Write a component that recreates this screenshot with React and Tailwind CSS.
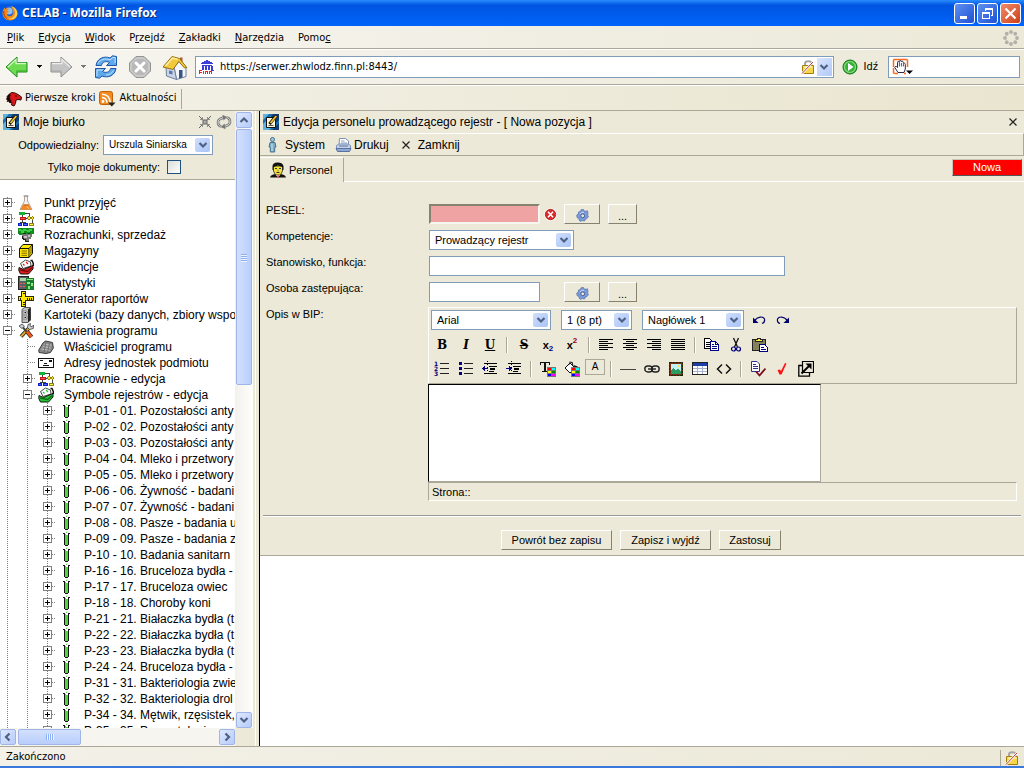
import React from "react";

const UI = "font-['DejaVu_Sans_Condensed','Noto_Sans',sans-serif]";

/* ---------- shared drawing helpers ---------- */

function Pic({ w = 16, h = 16, box, crisp = false, children }) {
  return (
    <svg
      width={w}
      height={h}
      viewBox={box || `0 0 ${w} ${h}`}
      shapeRendering={crisp ? "crispEdges" : "auto"}
      aria-hidden="true"
      className="block shrink-0"
      fill="none"
    >
      {children}
    </svg>
  );
}

function Chevron({ dir = "down", color = "#4d6185" }) {
  const d = {
    down: "M1.500 3 L5 6.500 L8.500 3",
    up: "M1.500 7 L5 3.500 L8.500 7",
    left: "M6.500 1.500 L3 5 L6.500 8.500",
    right: "M3.500 1.500 L7 5 L3.500 8.500",
  }[dir];
  return (
    <Pic w={10} h={10}>
      <path d={d} stroke={color} strokeWidth="2.200" />
    </Pic>
  );
}

/* ---------- browser icons ---------- */

const Firefox = () => (
  <Pic>
    <circle cx="8" cy="8" r="7" fill="#2b5fc7" />
    <circle cx="7" cy="6" r="3.600" fill="#8fc1f5" />
    <path d="M8 15.500C3.500 15.500.500 12 .500 8 .500 5.500 1.500 4 2.500 2.500L3.200 4.200C4.500 3 6 3.200 7 4L5.500 5.500 7 7C5.500 7.500 4.500 8.500 5 10 6.500 12 10 11.500 11 9 11.800 6.500 10.500 3.500 9 1.500 13 2 15.500 5 15.500 8.500 15.500 12.500 12 15.500 8 15.500Z" fill="#f08a1d" />
    <path d="M9 1.500C12 3 13.500 5.500 13 9 12.500 12 9.500 14 6 13.500 9 15.500 15 14 15.300 8.500 15.300 5 13 2 9 1.500Z" fill="#fbd34b" />
    <path d="M1 6C.500 10 3 14.500 8 15.300 4 13.500 2 10 2.500 6Z" fill="#c8480f" />
  </Pic>
);

const BackArrow = ({ on }) => (
  <Pic w={24} h={24}>
    <path d="M1 12 12 2V7.500H22V17H12V22Z" fill={on ? "#6ddb4f" : "#c4c4c4"} stroke={on ? "#1d8a1c" : "#8f8f8f"} strokeLinejoin="round" />
    <path d="M3 12 11 4.500V8.500H21" stroke={on ? "#d2f7c5" : "#ececec"} strokeWidth="1.300" />
    <path d="M11 16H21" stroke={on ? "#3fb42d" : "#adadad"} strokeWidth="1.300" />
  </Pic>
);

const Reload = () => (
  <Pic w={24} h={24}>
    <path d="M2 10.500C3 3.500 10 .500 16 3L18.500 .800 22.500 1.500V10.500H12.500L15.500 7.500C12 5.500 8 7 7.500 10.500Z" fill="#5fa8ea" stroke="#1c57ab" />
    <path d="M22 13.500C21 20.500 14 23.500 8 21L5.500 23.200 1.500 22.500V13.500H11.500L8.500 16.500C12 18.500 16 17 16.500 13.500Z" fill="#5fa8ea" stroke="#1c57ab" />
    <path d="M4 8.500C6 4.500 11 3 16 4.800L19 2.500H21.200V8" stroke="#c5e4ff" />
    <path d="M3 21V15H9M19.500 15.500C18 18.500 15 20 12 20" stroke="#c5e4ff" />
  </Pic>
);

const Stop = () => (
  <Pic w={24} h={24}>
    <path d="M8 1.500H16L22.500 8V16L16 22.500H8L1.500 16V8Z" fill="#b9b9b9" stroke="#949494" />
    <path d="M8.500 3H15.500L21 8.500V15.500L15.500 21H8.500L3 15.500V8.500Z" stroke="#dadada" />
    <path d="M8 8 16 16M16 8 8 16" stroke="#fff" strokeWidth="3" strokeLinecap="round" />
  </Pic>
);

const Home = () => (
  <Pic w={26} h={25}>
    <path d="M18 2.500H20.500V7H18Z" fill="#b5562e" />
    <path d="M12 12 17.500 6 24 12V21.500L14.500 24.500Z" fill="#f3f6fb" stroke="#6d7f9b" />
    <path d="M4 12 12.500 14 14.500 24.500 4.500 21Z" fill="#c9d6e8" stroke="#6d7f9b" />
    <path d="M1 12 10 1.500 17.500 3.500 24.800 12.500 22.500 13 16.800 6.500 11 14.500Z" fill="#f3c83c" stroke="#96700d" />
    <path d="M3.500 11 10.500 3 15.500 4.300" stroke="#fdf0a6" strokeWidth="1.400" />
    <path d="M17 15H20.500V22.500L17 23.500Z" fill="#39567f" />
    <path d="M7 15.500 10.500 16.200V19.500L7 18.700Z" fill="#5c7bab" />
  </Pic>
);

const Favicon = () => (
  <Pic crisp>
    <path d="M2 4 8 1 14 4V5H2ZM3 6H13V7H3ZM2 12H15V11H2Z" fill="#3b3fd6" />
    <path d="M4 7V11M7 7V11M10 7V11M13 7V11" stroke="#3b3fd6" strokeWidth="2" />
    <path d="M0 11H12V15H0Z" fill="#fff" />
    <path d="M0 11H3V12H1V13H3V14H1V15H0ZM4 12H5V15H4ZM6 12H9V15H8V13H7V15H6ZM10 12H13V15H12V13H11V15H10Z" fill="#e22" />
  </Pic>
);

const Padlock = () => (
  <Pic w={14} h={16}>
    <path d="M4 7V4.500C4 1.500 10.500 1.500 10.500 4.500V7" stroke="#a5a5a5" strokeWidth="2" />
    <path d="M1.500 6.500H12.500V14.500H1.500Z" fill="#f7d548" stroke="#a37e0b" />
    <path d="M3 8H11.500" stroke="#fdf1a8" strokeWidth="1.500" />
    <path d="M1 14.500 12 3" stroke="#fff" strokeWidth="2.400" />
    <path d="M1 14.500 12 3" stroke="#b33" />
  </Pic>
);

const Go = () => (
  <Pic>
    <circle cx="8" cy="8" r="7" fill="#34b234" stroke="#157515" />
    <circle cx="8" cy="8" r="5.500" stroke="#8edb86" strokeWidth="1.200" />
    <path d="M6 4 11.500 8 6 12Z" fill="#fff" />
  </Pic>
);

const Hand = () => (
  <Pic w={22} h={18}>
    <path d="M1.500 9V2.500Q1.500 1.500 2.500 1.500H14.500Q15.500 1.500 15.500 2.500V9" stroke="#ff6a16" strokeWidth="1.500" />
    <path d="M1.500 10V14.500Q1.500 15.500 3 15.500H6M12 15.500H14" stroke="#ff6a16" strokeWidth="1.500" />
    <path d="M6 14.500 2.800 9.500C2.800 8 4.500 8 5.500 9.500V4.500C5.500 3 7 3 7.300 4.500V3.500C7.500 2 9 2 9.300 3.500V4C9.600 2.800 11.200 3 11.400 4.500V5.500C11.800 4.600 13.300 5 13.300 6.500V11L12 14.500Z" fill="#fff" stroke="#2b2b48" />
    <path d="M7.400 5V8.500M9.400 5V8.500M11.400 6V8.500" stroke="#2b2b48" strokeWidth=".8" />
    <path d="M14 12.500H21L17.500 16Z" fill="#000" />
  </Pic>
);

const Horse = () => (
  <Pic>
    <path d="M1 7 4 2.500 6 1.500 9 2 12 3.500 15.500 6 15 9 12 8.500 10 9 9.500 12.500 8 15 5.500 14 6 11.500 3 11 4 9 1 9Z" fill="#d81818" stroke="#3a0a0a" />
    <path d="M4 3 2 5 3.500 5 1.500 7.500 3.500 7.500 2 10 4.500 9.500 4 12" stroke="#1d0505" strokeWidth="1.500" />
    <circle cx="10" cy="5" r=".8" fill="#200" />
  </Pic>
);

const Feed = () => (
  <Pic w={17} h={16}>
    <rect x=".5" y=".5" width="13" height="13" rx="2" fill="#f48a1c" stroke="#c3610a" />
    <circle cx="4" cy="10.500" r="1.400" fill="#fff" />
    <path d="M3 6.500Q7.800 6.800 8 11.800M3 3.300Q11 3.600 11.200 11.800" stroke="#fff" strokeWidth="1.500" />
    <path d="M9 11.500H16.500L12.800 15.500Z" fill="#222" />
  </Pic>
);

/* ---------- tree icons ---------- */

const Flask = () => (
  <Pic>
    <path d="M6.500 1V6L2 14.500H14L9.500 6V1Z" fill="#f3f3f3" stroke="#b5a79a" />
    <path d="M5 9.500H11L13.700 14.700H2.300Z" fill="#ef8a2a" />
    <path d="M5.500 10H10.500" stroke="#c45d12" />
    <path d="M5.500 1H10.500" stroke="#888" />
    <path d="M9 11.500 10.500 13.500" stroke="#fbd5a6" />
  </Pic>
);

const OrgChart = () => (
  <Pic crisp>
    <path d="M7 2H12V3H7ZM11 3H12V6H11ZM4 4H5V6H4ZM8 7H10V8H8ZM4 9H5V12H4ZM14 9H15V12H14ZM2 11H8V12H2Z" fill="#444" />
    <path d="M1 1H7V4H1Z" fill="#12b531" />
    <path d="M2 6H8V9H2Z" fill="#c8141c" />
    <path d="M3 7H7V8H3Z" fill="#ff4a4a" />
    <path d="M10 5H12V6H13V8H12V9H10V8H9V6H10ZM14 5H15V6H16V8H15V9H14V8H13V6H14Z" fill="#8d8212" />
    <path d="M10 6H12V8H10ZM14 6H15V8H14Z" fill="#f4e13a" />
    <path d="M0 12H4V15H0ZM5 12H10V15H5Z" fill="#0b1fc4" />
    <path d="M1 13H3V14H1ZM6 13H9V14H6Z" fill="#4b63ff" />
    <path d="M11 12H16V15H11Z" fill="#8d8212" />
    <path d="M12 13H15V14H12Z" fill="#fff04a" />
  </Pic>
);

const Money = () => (
  <Pic crisp>
    <path d="M0 1H16V7H14V8H1V7H0Z" fill="#128a1c" />
    <path d="M1 2H3V3H5V2H8V3H11V2H14V4H12V5H9V4H6V6H3V4H1Z" fill="#39d146" />
    <path d="M5 6H8V7H5ZM10 6H12V7H10Z" fill="#053d0a" />
    <path d="M4 7H14V10H13V12H11V14H8V12H5V10H4Z" fill="#777" />
    <path d="M6 9H9V11H6ZM10 8H12V10H10Z" fill="#c4c4c4" />
    <path d="M4 9H5V11H6V12H8V14H11V15H7V13H5V12H4Z" fill="#222" />
  </Pic>
);

const Crate = () => (
  <Pic>
    <path d="M1.500 5.500 5 1.500H14.500V10.500L11 14.500H1.500Z" fill="#ffe600" stroke="#111" />
    <path d="M1.500 5.500H11V14.500M11 5.500 14.500 1.500" stroke="#111" />
    <path d="M11.500 6 14 3V10L11.500 13Z" fill="#b49b00" />
    <path d="M3.500 8H9M3.500 10.200H9M3.500 12.300H9" stroke="#7a6a00" />
  </Pic>
);

const Binder = ({ base, dark }) => (
  <Pic>
    <path d="M2.500 4.500 7.500 1 12.500 3 13 7 5 9.500Z" fill="#fff" stroke="#333" strokeWidth=".9" />
    <path d="M5 5 6.500 6.500M8 3 10 5" stroke={base} strokeWidth="1.200" />
    <path d="M1 8.500 5.500 10.500 15 6.500V10L10.500 15H2.500L.8 11.500Z" fill={base} stroke="#111" />
    <path d="M2 11 9.500 12.500 14.500 8.500" stroke={dark} strokeWidth="1.500" />
    <path d="M12.500 1.500H14L15.300 4.500V7" stroke="#111" strokeWidth="1.500" />
  </Pic>
);

const Stats = () => (
  <Pic crisp>
    <path d="M0 1H11V15H0Z" fill="#222" />
    <path d="M1 2H10V14H1Z" fill="#5c6066" />
    <path d="M2 3H9V6H2Z" fill="#a6d5a8" />
    <path d="M2 8H4V9H2ZM5 8H7V9H5ZM2 11H4V12H2ZM5 11H7V12H5Z" fill="#f55" />
    <rect x="8" y="3" width="8" height="12" fill="#1a7d2b" />
    <path d="M9 4H15V5H9ZM9 7H12V9H9ZM13 8H15V11H13ZM10 11H12V14H10Z" fill="#8dea7f" />
  </Pic>
);

const Rulers = () => (
  <Pic crisp>
    <path d="M3 0H8V5H16V10H8V16H3V10H0V5H3Z" fill="#2e2a00" />
    <path d="M4 1H7V6H15V9H7V15H4V9H1V6H4Z" fill="#ffe900" />
    <path d="M5 2H7V3H5ZM5 11H7V12H5ZM5 13H7V14H5ZM9 7H10V9H9ZM11 7H12V9H11ZM13 7H14V9H13ZM2 7H3V9H2Z" fill="#222" />
  </Pic>
);

const Cabinet = () => (
  <Pic>
    <path d="M4 2.500 6.500.500H12.500V13L10 15.500H4Z" fill="#bdbdbd" stroke="#555" />
    <path d="M10 2.500 12.500.500V13L10 15.500Z" fill="#222" />
    <path d="M5 4H9V7H5ZM5 9H9V12H5Z" fill="#e9e9e9" stroke="#777" strokeWidth=".8" />
    <path d="M6.500 5.500H8M6.500 10.500H8" stroke="#111" />
  </Pic>
);

const Tools = () => (
  <Pic>
    <path d="M3 13.500 11 5" stroke="#111" strokeWidth="3.600" />
    <path d="M3 13.500 11 5" stroke="#d8a92b" strokeWidth="2" />
    <path d="M4.500 4 9 9" stroke="#444" strokeWidth="2" />
    <path d="M9 8.500 13.500 14" stroke="#111" strokeWidth="4.200" />
    <path d="M9 8.500 13.500 14" stroke="#ea5a1b" strokeWidth="2.800" />
    <path d="M1 3 4 1 6.500 3 4 5.500ZM10 1.500 12.500.500 12 3 14 3.800 15.500 2 15.300 5.500 11.500 6.500 9.500 4.500Z" fill="#c9ced4" stroke="#444" strokeWidth=".8" />
  </Pic>
);

const Building = () => (
  <Pic>
    <path d="M.8 11 5 4 7.500 2 14.500 3.500 15.300 9 12.500 13.500 8 14.500 1 13.500Z" fill="#8a8a8a" stroke="#3a3a3a" />
    <path d="M6 5 13.500 6.300M5 7.500 12.500 8.800M3.500 10 11.500 11.300" stroke="#bdbdbd" strokeWidth="1.200" />
    <path d="M8 3 6 13M11.500 4 9.500 13.500" stroke="#666" strokeWidth=".8" />
  </Pic>
);

const Card = () => (
  <Pic crisp>
    <path d="M0 3H16V13H0Z" fill="#111" />
    <path d="M1 4H15V12H1Z" fill="#fff" />
    <path d="M2 5H5V6H2ZM6 8H9V9H6ZM5 10H11V11H5ZM11 5H14V7H11Z" fill="#111" />
  </Pic>
);

const Tube = () => (
  <Pic crisp>
    <path d="M7 4H10V15H7Z" fill="#51d63d" />
    <path d="M6 3H7V14H6ZM10 3H11V14H10ZM7 14H10V15H7Z" fill="#111" />
    <path d="M5 2H7V3H5ZM10 2H12V3H10Z" fill="#111" />
    <path d="M7 3H8V4H7ZM8 1H9V2H8Z" fill="#51d63d" />
  </Pic>
);

/* ---------- application icons ---------- */

const Notepad = () => (
  <Pic>
    <rect width="16" height="16" fill="#5cb4e2" />
    <path d="M8 0H16V16H8Z" fill="#0f3f72" />
    <path d="M0 6 6 0H10L0 10ZM6 16 16 6V9L9 16Z" fill="#1d6cad" />
    <path d="M3.500 3.500H10.500L12.500 6V13.500H3.500Z" fill="#fdf6d5" stroke="#111" />
    <path d="M5.500 11.500H10.500" stroke="#555" />
    <path d="M6.500 10 13.500 1.500" stroke="#111" strokeWidth="3" />
    <path d="M7.500 9 13.300 2" stroke="#f6c22c" strokeWidth="1.800" />
  </Pic>
);

const Shrink = () => (
  <Pic w={14} h={14}>
    <path d="M1 1 4.500 4.500M13 1 9.500 4.500M1 13 4.500 9.500M13 13 9.500 9.500" stroke="#666" />
    <path d="M4.500 2V4.500H2M9.500 2V4.500H12M4.500 12V9.500H2M9.500 12V9.500H12" stroke="#888" strokeWidth=".9" />
    <rect x="5" y="5" width="4" height="4" fill="#aaa" stroke="#666" />
  </Pic>
);

const Sync = () => (
  <Pic>
    <path d="M5.500 12.500C1.500 12 .8 7 4 5L7.500 3.500" stroke="#777" strokeWidth="2.600" />
    <path d="M5.500 12.500C1.500 12 .8 7 4 5L7.500 3.500" stroke="#ddd" />
    <path d="M10.500 3.500C14.500 4 15.200 9 12 11L8.500 12.500" stroke="#777" strokeWidth="2.600" />
    <path d="M10.500 3.500C14.500 4 15.200 9 12 11L8.500 12.500" stroke="#ddd" />
    <path d="M6.500.800 11 3 7.500 6.500ZM9.500 15.200 5 13 8.500 9.500Z" fill="#777" />
  </Pic>
);

const Person = () => (
  <Pic w={9} h={16}>
    <circle cx="4.500" cy="2.500" r="2" fill="#9fc9d8" stroke="#3f6a86" />
    <path d="M2 5.500H7L8 10 6.700 10.500V15H2.300V10.500L1 10Z" fill="#79aec6" stroke="#3f6a86" strokeWidth=".9" />
    <path d="M4 6.500V14" stroke="#cfe8f2" />
  </Pic>
);

const Printer = () => (
  <Pic w={17} h={16}>
    <path d="M4 8 4.500 1.500H10.500L13.500 4V8Z" fill="#fff" stroke="#7d91b8" />
    <path d="M6 4H9.500M6 6H12" stroke="#8ca0c4" />
    <path d="M1.500 8.500 4 7H13L15.500 8.500V12H1.500Z" fill="#c5d2ec" stroke="#7d91b8" />
    <path d="M1 11.500H16L14.500 14.500H2.500Z" fill="#8fa7d4" stroke="#5b71a1" />
    <path d="M4 9H13" stroke="#5a6f9b" />
  </Pic>
);

const Cross = () => (
  <Pic w={8} h={8}>
    <path d="M.5 .5 7.500 7.500M7.500 .5 .5 7.500" stroke="#222" strokeWidth="1.200" />
  </Pic>
);

const Face = () => (
  <Pic>
    <path d="M0 15.500C1 12.500 4 12 8 12S15 12.500 16 15.500Z" fill="#111" />
    <path d="M3.500 4V9L5.500 13H10.500L12.500 9V4Z" fill="#f2e23a" stroke="#222" strokeWidth=".8" />
    <path d="M2.500 8V4C3 1 5.500 .5 8 .5S13 1.500 13.500 4V8H12.500V5L8 3.500 3.500 5V8Z" fill="#111" />
    <path d="M5 6.500H7M9 6.500H11M6.500 10.500H9.500" stroke="#333" />
    <path d="M7 7.500H9V9.500H7Z" fill="#b8b06a" />
    <path d="M6 13H10L8 15.500Z" fill="#fff" />
    <path d="M7.500 13H8.700V15.500H7.500Z" fill="#d22" />
  </Pic>
);

const ErrorMark = () => (
  <Pic w={13} h={13}>
    <circle cx="6.500" cy="6.500" r="6.300" fill="#fff" />
    <circle cx="6.500" cy="6.500" r="5.200" fill="#d92b2b" stroke="#b01818" strokeWidth=".8" />
    <path d="M4 3.800 9 9.200M9 3.800 4 9.200" stroke="#fff" strokeWidth="1.600" />
  </Pic>
);

const Gear = () => (
  <Pic w={13} h={13}>
    <path d="M5 .8 7.500.500 8 2 10 2.300 11.500 1.800 12 4.500 11.500 6 12.500 7.500 11 9.500 9.500 10 8.500 12 6 11.500 4.500 12.500 3 11 3 9.500 1 8.500.800 6 2.300 5 2.500 3 4.500 2.500Z" fill="#7a9ad8" stroke="#5a76b5" strokeWidth=".8" />
    <path d="M4 5 5.500 3.500 8 3.200" stroke="#cfdcf7" />
    <circle cx="6.700" cy="6.800" r="1.900" fill="#ece9d8" stroke="#38528f" strokeWidth=".9" />
  </Pic>
);

/* ---------- editor icons ---------- */

const Lines = ({ rows }) => (
  <Pic crisp>
    <path d={rows.map(([a, b], i) => `M${a} ${2 + i * 2}.5H${b}`).join("")} stroke="#000" />
  </Pic>
);
const full = [1, 15];
const AlignLeft = () => <Lines rows={[full, [1, 10], full, [1, 10], full, [1, 10]]} />;
const AlignCenter = () => <Lines rows={[full, [4, 12], full, [4, 12], full, [4, 12]]} />;
const AlignRight = () => <Lines rows={[full, [6, 15], full, [6, 15], full, [6, 15]]} />;
const AlignFull = () => <Lines rows={[full, full, full, full, full, full]} />;

const Undo = () => (
  <Pic>
    <path d="M4 8C7 4.500 12 4 13.500 7C14 9.500 13 10.800 11 11.500" stroke="#00006a" strokeWidth="1.200" />
    <path d="M2 5.500V11H7.500Z" fill="#00006a" />
  </Pic>
);
const Redo = () => (
  <Pic>
    <path d="M12 8C9 4.500 4 4 2.500 7C2 9.500 3 10.800 5 11.500" stroke="#00006a" strokeWidth="1.200" />
    <path d="M14 5.500V11H8.500Z" fill="#00006a" />
  </Pic>
);
const Copy = () => (
  <Pic crisp>
    <path d="M.5 1.500H5.500L8.500 4.500V11.500H.5Z" fill="#fff" stroke="#000" />
    <path d="M2 5.500H6M2 7.500H6M2 9.500H6" stroke="#000" />
    <path d="M6.500 4.500H11.500L14.500 7.500V13.500H6.500Z" fill="#fff" stroke="#000080" />
    <path d="M11.500 4.500V7.500H14M8 7.500H10M8 9.500H13M8 11.500H13" stroke="#000080" />
  </Pic>
);
const Cut = () => (
  <Pic>
    <path d="M5.500 1 9.500 10M10.500 1 6.500 10" stroke="#111" strokeWidth="1.300" />
    <circle cx="5.500" cy="12" r="2" stroke="#000080" strokeWidth="1.200" />
    <circle cx="10.500" cy="12" r="2" stroke="#000080" strokeWidth="1.200" />
  </Pic>
);
const Paste = () => (
  <Pic crisp>
    <rect x=".5" y="2.500" width="13" height="11" fill="#84825a" stroke="#222" />
    <path d="M3 5V2H5V1H9V2H11V5Z" fill="#222" />
    <path d="M4 4V3H6V2H8V3H10V4Z" fill="#ffef3a" />
    <path d="M7.500 7.500H12.500L15.500 10.500V14.500H7.500Z" fill="#fff" stroke="#000080" />
    <path d="M9 10.500H12M9 12.500H14" stroke="#000080" />
  </Pic>
);
const ListDots = () => (
  <Pic crisp>
    <path d="M1 1H4V4H1ZM1 6H4V9H1ZM1 11H4V14H1Z" fill="#000080" />
    <path d="M6 2.500H15M6 7.500H15M6 12.500H15" stroke="#222" />
  </Pic>
);
const ListNumbers = () => (
  <div className="flex">
    <span className="flex w-1.5 flex-col text-left font-['DejaVu_Sans',sans-serif] text-[6px] leading-[5px] font-bold text-[#000080]" aria-hidden="true">
      <span>1</span>
      <span>2</span>
      <span>3</span>
    </span>
    <Pic w={10} crisp>
      <path d="M0 2.500H9M0 7.500H9M0 12.500H9" stroke="#222" />
    </Pic>
  </div>
);
const Indent = ({ out }) => (
  <Pic crisp>
    <path d="M2 2.500H15M7 5.500H15M7 10.500H12M2 12.500H15" stroke="#000" />
    <path d="M8 8H13" stroke="#000" strokeWidth="2" />
    <path d="M5.500 0V15" stroke="#000" strokeDasharray="1 2" />
    <path d={out ? "M0 7.500 3 5V7H6V8H3V10Z" : "M6 7.500 3 5V7H0V8H3V10Z"} fill="#000080" />
  </Pic>
);
const Swatches = () => (
  <g shapeRendering="crispEdges">
    <rect x="7" y="6" width="9" height="10" fill="#777" />
    <path d="M8 7H11V9H8Z" fill="#f00" />
    <path d="M12 7H15V9H12Z" fill="#0ff" />
    <path d="M8 10H11V12H8Z" fill="#ff0" />
    <path d="M12 10H15V12H12Z" fill="#080" />
    <path d="M8 13H11V15H8Z" fill="#00f" />
    <path d="M12 13H15V15H12Z" fill="#f0f" />
  </g>
);
const TextColor = () => (
  <Pic crisp>
    <path d="M0 1H10V4H9V2H6V10H8V11H2V10H4V2H1V4H0Z" fill="#111" />
    <Swatches />
  </Pic>
);
const FillColor = () => (
  <Pic>
    <path d="M1 7 6 2 11 7 6 12Z" fill="#fff" stroke="#111" />
    <path d="M6 2V.5M4 4 8 1 9 5" stroke="#111" />
    <path d="M10 5 13 6V9" stroke="#111" strokeWidth="1.500" />
    <Swatches />
  </Pic>
);
const Rule = () => (
  <Pic crisp>
    <path d="M0 8.500H16" stroke="#444" />
  </Pic>
);
const Chain = () => (
  <Pic>
    <rect x=".8" y="5" width="7.500" height="6" rx="3" stroke="#222" strokeWidth="1.400" />
    <rect x="7.700" y="5" width="7.500" height="6" rx="3" stroke="#222" strokeWidth="1.400" />
    <path d="M4 8H12" stroke="#222" strokeWidth="1.400" />
  </Pic>
);
const Picture = () => (
  <Pic crisp>
    <rect x="1" y="1" width="14" height="14" fill="#7a2e12" />
    <rect x="1.500" y="1.500" width="13" height="13" stroke="#1a2a08" strokeDasharray="2 1" />
    <rect x="3" y="3" width="10" height="10" fill="#bff3f5" />
    <path d="M3 13V10L6 6 8 9 10 8 13 11V13Z" fill="#2b9b61" />
    <path d="M10 4H12V6H10Z" fill="#ffe14a" />
    <path d="M5 8 7 6 8 9Z" fill="#fff" />
  </Pic>
);
const TableIcon = () => (
  <Pic crisp>
    <rect x=".5" y="1.500" width="15" height="12" fill="#fff" stroke="#222" />
    <path d="M1 2H15V5H1Z" fill="#1f3fa8" />
    <path d="M1 7.500H15M1 10.500H15M5.500 5V13M10.500 5V13" stroke="#a9b3cf" />
  </Pic>
);
const Code = () => (
  <Pic>
    <path d="M6 3.500 1.500 8 6 12.500M10 3.500 14.500 8 10 12.500" stroke="#111" strokeWidth="1.500" />
  </Pic>
);
const Spell = () => (
  <Pic>
    <path d="M1.500.500H7L9.500 3V10.500H1.500Z" fill="#fff" stroke="#33338a" />
    <path d="M3 3.500H6M3 5.500H8M3 7.500H8" stroke="#33338a" />
    <path d="M6 10.500 9.500 14.500 15.500 7.500" stroke="#7c0b1e" strokeWidth="1.800" />
  </Pic>
);
const Tick = () => (
  <Pic>
    <path d="M3.500 9 6 8.500 7 10 11 2 12.500 2.500 7.500 13.500 5.500 13.500Z" fill="#f11" />
  </Pic>
);
const Expand = () => (
  <Pic>
    <path d="M4.500.500H15.500V11.500H4.500Z" fill="#ece9d8" stroke="#000" strokeWidth="1.200" />
    <path d="M4 4.500H.8V15.200H11.500V12" stroke="#000" strokeWidth="1.300" />
    <path d="M3.500 12.500 12 4" stroke="#000" strokeWidth="2" />
    <path d="M7.500 2.500H13.500V8.500Z" fill="#000" />
  </Pic>
);

/* ---------- small controls ---------- */

function XpSelect({ label, options, className, text = "text-[11px]", id }) {
  return (
    <div className={`relative flex h-5 border border-[#7f9db9] bg-white ${className}`}>
      <select
        id={id}
        aria-label={label}
        className={`w-full appearance-none bg-transparent pr-5 pl-[5px] ${text} leading-none outline-none`}
      >
        {options.map((o) => (
          <option key={o}>{o}</option>
        ))}
      </select>
      <span className="pointer-events-none absolute inset-y-0.5 right-0.5 flex w-[15px] items-center justify-center rounded-[2px] bg-linear-to-br from-[#cfdefd] to-[#aac4f6]">
        <Chevron />
      </span>
    </div>
  );
}

function RaisedButton({ children, className = "", ...rest }) {
  return (
    <button
      type="button"
      className={`flex h-5 items-center justify-center border border-t-white border-r-[#85826f] border-b-[#85826f] border-l-white bg-[#ece9d8] text-[11px] leading-none ${className}`}
      {...rest}
    >
      {children}
    </button>
  );
}

function ScrollButton({ dir, label }) {
  return (
    <button
      type="button"
      aria-label={label}
      className="flex h-4 w-4 shrink-0 items-center justify-center rounded-[2px] border border-[#9fb5e8] bg-linear-to-br from-[#dfe8fe] to-[#b6cbfa]"
    >
      <Chevron dir={dir} />
    </button>
  );
}

/* ---------- browser chrome ---------- */

function TitleBar() {
  const btn = "flex h-[21px] w-[21px] items-center justify-center rounded-[3px] border border-white";
  return (
    <header className="flex h-[26px] shrink-0 items-center gap-1 bg-linear-to-b from-[#2a8bff] via-[#0055e1] via-20% to-[#0064fb] pr-[3px] pl-0.5">
      <Firefox />
      <h1 className="flex-1 font-['Noto_Sans',sans-serif] text-xs font-bold text-white [text-shadow:1px_1px_0_#0b2a7a]">
        CELAB - Mozilla Firefox
      </h1>
      <div className="flex gap-0.5">
        <button type="button" aria-label="Minimalizuj" className={`${btn} bg-linear-to-br from-[#5f90f0] to-[#1f4fd4]`}>
          <Pic w={15} h={15} crisp>
            <path d="M3 10H10V13H3Z" fill="#fff" />
          </Pic>
        </button>
        <button type="button" aria-label="Przywróć" className={`${btn} bg-linear-to-br from-[#5f90f0] to-[#1f4fd4]`}>
          <Pic w={15} h={15} crisp>
            <path d="M5 2H13V10H11V9H12V4H6V5H5ZM2 6H10V13H2ZM3 8V12H9V8Z" fill="#fff" fillRule="evenodd" />
          </Pic>
        </button>
        <button type="button" aria-label="Zamknij okno" className={`${btn} bg-linear-to-br from-[#ef8a68] to-[#cf3a12]`}>
          <Pic w={15} h={15}>
            <path d="M2.500 2.500 12.500 12.500M12.500 2.500 2.500 12.500" stroke="#fff" strokeWidth="2.200" />
          </Pic>
        </button>
      </div>
    </header>
  );
}

const menus = [
  ["", "P", "lik"],
  ["", "E", "dycja"],
  ["", "W", "idok"],
  ["P", "r", "zejdź"],
  ["", "Z", "akładki"],
  ["", "N", "arzędzia"],
  ["Pomo", "c", ""],
];

const ringDots = [0, 45, 90, 135, 180, 225, 270, 315];

function MenuBar() {
  return (
    <nav className="flex h-[23px] shrink-0 items-center border-b border-[#aca899] bg-linear-to-r from-[#f6f5f0] to-[#ece9d8] pt-px pr-[5px] pl-[7px]">
      <div className="flex flex-1 gap-3.5">
        {menus.map(([a, b, c]) => (
          <button key={a + b + c} type="button" className="leading-[14px]">
            {a}
            <span className="underline">{b}</span>
            {c}
          </button>
        ))}
      </div>
      <Pic w={16} h={16}>
        {ringDots.map((deg) => (
          <circle
            key={deg}
            cx={8 + 6 * Math.cos((deg * Math.PI) / 180)}
            cy={8 + 6 * Math.sin((deg * Math.PI) / 180)}
            r="1.900"
            fill="#b2b0a8"
          />
        ))}
      </Pic>
    </nav>
  );
}

const Caret = ({ color }) => (
  <Pic w={6} h={4} crisp>
    <path d="M0 0H6L3 3Z" fill={color} />
  </Pic>
);

function NavBar() {
  return (
    <div className="flex h-9 shrink-0 items-center border-t border-b border-t-white border-b-[#aca899] bg-linear-to-r from-[#f6f5f0] to-[#ece9d8] pr-1 pl-[5px]">
      <button type="button" aria-label="Wstecz"><BackArrow on /></button>
      <button type="button" aria-label="Historia wstecz" className="px-[7px]"><Caret color="#111" /></button>
      <button type="button" aria-label="Dalej" className="-scale-x-100"><BackArrow /></button>
      <button type="button" aria-label="Historia dalej" className="px-[7px]"><Caret color="#777" /></button>
      <div className="flex items-center gap-2.5 pl-px">
        <button type="button" aria-label="Odśwież"><Reload /></button>
        <button type="button" aria-label="Zatrzymaj"><Stop /></button>
        <button type="button" aria-label="Strona startowa"><Home /></button>
      </div>
      <div className="ml-[7px] flex h-[22px] flex-1 items-center border border-[#7f9db9] bg-white px-[3px]">
        <Favicon />
        <input
          aria-label="Adres"
          defaultValue="https://serwer.zhwlodz.finn.pl:8443/"
          className="min-w-0 flex-1 bg-transparent px-[5px] pt-px outline-none"
        />
        <Padlock />
        <button type="button" aria-label="Lista adresów" className="-mr-0.5 ml-0.5 flex h-[18px] w-[15px] items-center justify-center bg-linear-to-br from-[#dbe6fd] to-[#b1c9f7]">
          <Chevron />
        </button>
      </div>
      <button type="button" className="ml-2 flex items-center gap-1.5 pr-2.5">
        <Go />
        Idź
      </button>
      <div className="flex h-[22px] w-[132px] items-center border border-[#7f9db9] bg-white pl-[3px]">
        <Hand />
        <input aria-label="Szukaj" className="min-w-0 flex-1 bg-transparent px-1 outline-none" />
      </div>
    </div>
  );
}

function Bookmarks() {
  return (
    <div className="flex h-[25px] shrink-0 items-center gap-1 border-t border-white bg-linear-to-r from-[#f3f1e8] to-[#e9e5cf] pt-px pl-1.5">
      <a href="#start" className="flex items-center gap-[3px]">
        <Horse />
        Pierwsze kroki
      </a>
      <a href="#news" className="flex items-center gap-[3px]">
        <Feed />
        Aktualności
      </a>
      <span className="h-5 w-px bg-[#aca899]" />
    </div>
  );
}

/* ---------- sidebar ---------- */

const tests = [
  "P-01 - 01. Pozostałości anty",
  "P-02 - 02. Pozostałości anty",
  "P-03 - 03. Pozostałości anty",
  "P-04 - 04. Mleko i przetwory",
  "P-05 - 05. Mleko i przetwory",
  "P-06 - 06. Żywność - badani",
  "P-07 - 07. Żywność - badani",
  "P-08 - 08. Pasze - badania u",
  "P-09 - 09. Pasze - badania z",
  "P-10 - 10. Badania sanitarn",
  "P-16 - 16. Bruceloza bydła -",
  "P-17 - 17. Bruceloza owiec",
  "P-18 - 18. Choroby koni",
  "P-21 - 21. Białaczka bydła (t",
  "P-22 - 22. Białaczka bydła (t",
  "P-23 - 23. Białaczka bydła (t",
  "P-24 - 24. Bruceloza bydła -",
  "P-31 - 31. Bakteriologia zwie",
  "P-32 - 32. Bakteriologia drol",
  "P-34 - 34. Mętwik, rzęsistek,",
  "P-35 - 35. Parazytologia",
];

const tree = [
  { t: "Punkt przyjęć", d: 0, s: "+", i: <Flask />, first: true },
  { t: "Pracownie", d: 0, s: "+", i: <OrgChart /> },
  { t: "Rozrachunki, sprzedaż", d: 0, s: "+", i: <Money /> },
  { t: "Magazyny", d: 0, s: "+", i: <Crate /> },
  { t: "Ewidencje", d: 0, s: "+", i: <Binder base="#e02020" dark="#7d0808" /> },
  { t: "Statystyki", d: 0, s: "+", i: <Stats /> },
  { t: "Generator raportów", d: 0, s: "+", i: <Rulers /> },
  { t: "Kartoteki (bazy danych, zbiory wspo", d: 0, s: "+", i: <Cabinet /> },
  { t: "Ustawienia programu", d: 0, s: "-", i: <Tools /> },
  { t: "Właściciel programu", d: 1, i: <Building /> },
  { t: "Adresy jednostek podmiotu", d: 1, i: <Card /> },
  { t: "Pracownie - edycja", d: 1, s: "+", i: <OrgChart /> },
  { t: "Symbole rejestrów - edycja", d: 1, s: "-", i: <Binder base="#23c934" dark="#0b6b15" /> },
  ...tests.map((t) => ({ t, d: 2, s: "+", i: <Tube /> })),
];

function Guide() {
  return (
    <Pic w={20} h={16} crisp>
      <path d="M7.500 0V16" stroke="#808080" strokeDasharray="1 1" />
    </Pic>
  );
}

function Branch({ sign, first }) {
  return (
    <Pic w={18} h={16} crisp>
      <path d={first ? "M7.500 2V16" : "M7.500 0V16"} stroke="#808080" strokeDasharray="1 1" />
      <path d="M8 7.500H16" stroke="#808080" strokeDasharray="1 1" />
      {sign && (
        <g>
          <path d="M3 3H12V12H3Z" fill="#808080" />
          <path d="M4 4H11V11H4Z" fill="#fff" />
          <path d={sign === "+" ? "M5 7.500H10M7.500 5V10" : "M5 7.500H10"} stroke="#000" />
        </g>
      )}
    </Pic>
  );
}

function Sidebar() {
  return (
    <aside className="flex w-[255px] shrink-0 pr-0.5">
      <div className="flex min-w-0 flex-1 flex-col">
        <div className="h-[69px] shrink-0 border-b border-[#aca899] pt-px pr-[3px] text-[11px]">
          <div className="flex h-5 items-center gap-1 pl-[3px]">
            <Notepad />
            <h2 className="flex-1 text-xs">Moje biurko</h2>
            <button type="button" aria-label="Zwiń panel"><Shrink /></button>
            <button type="button" aria-label="Odśwież panel"><Sync /></button>
          </div>
          <div className="mt-[3px] flex items-center justify-end gap-1 pr-[19px]">
            <label htmlFor="resp">Odpowiedzialny:</label>
            <XpSelect id="resp" text="text-[10px]" options={["Urszula Siniarska"]} className="w-[110px]" />
          </div>
          <label className="mt-1 flex items-center justify-end gap-[7px] pr-[51px]">
            Tylko moje dokumenty:
            <input type="checkbox" className="h-3.5 w-3.5 appearance-none border border-[#1c5180] bg-linear-to-br from-[#dcdcd7] to-white checked:bg-[#21a121]" />
          </label>
        </div>
        <ul className="min-h-0 flex-1 overflow-hidden bg-white pt-[15px] text-xs">
          {tree.map((n) => (
            <li key={n.t} className="flex h-4 items-center leading-4 whitespace-nowrap">
              {n.d > 0 && <Guide />}
              {n.d > 1 && <Guide />}
              <Branch sign={n.s} first={n.first} />
              {n.i}
              <a href="#node" className="pl-2.5">{n.t}</a>
            </li>
          ))}
        </ul>
        <div className="flex h-[18px] shrink-0 items-center justify-between bg-[#f6f5f0]">
          <ScrollButton dir="left" label="Przewiń w lewo" />
          <div className="flex flex-1 px-0.5">
            <div className="flex h-4 w-[63px] items-center justify-center gap-px rounded-[2px] border border-[#9fb5e8] bg-linear-to-b from-[#d3e0fe] to-[#b9cefb]">
              {[0, 1, 2, 3].map((k) => (
                <span key={k} className="h-1.5 w-px bg-[#8cb0f8] shadow-[1px_0_0_#eef4fe]" />
              ))}
            </div>
          </div>
          <ScrollButton dir="right" label="Przewiń w prawo" />
        </div>
      </div>
      <div className="flex w-[18px] shrink-0 flex-col pb-[18px]">
        <div className="flex flex-1 flex-col items-center bg-linear-to-r from-[#f3f1ec] to-[#fefefb] pt-px">
          <ScrollButton dir="up" label="Przewiń w górę" />
          <div className="flex w-full flex-1 flex-col items-center py-px">
            <div className="flex h-[44%] w-4 flex-col items-center justify-center gap-px rounded-[2px] border border-[#9fb5e8] bg-linear-to-r from-[#d3e0fe] to-[#b9cefb]">
              {[0, 1, 2, 3].map((k) => (
                <span key={k} className="h-px w-1.5 bg-[#8cb0f8] shadow-[0_1px_0_#eef4fe]" />
              ))}
            </div>
          </div>
          <ScrollButton dir="down" label="Przewiń w dół" />
        </div>
      </div>
    </aside>
  );
}

/* ---------- editor ---------- */

const Sep = () => (
  <span className="flex h-4 w-2.5 shrink-0 justify-center">
    <span className="w-0.5 border-r border-l border-r-white border-l-[#aca899]" />
  </span>
);

function Tool({ label, children }) {
  return (
    <button type="button" aria-label={label} className="flex h-6 w-6 shrink-0 items-center justify-center">
      {children}
    </button>
  );
}

const glyph = "font-['DejaVu_Serif',serif] text-xs leading-none font-bold";

function Editor() {
  return (
    <div className="mr-[7px] -mt-px -ml-px min-w-0">
      <div className="flex h-[77px] flex-col border border-t-white border-r-[#aca899] border-b-[#aca899] border-l-white pt-0.5 pl-px">
        <div className="flex h-5 items-center gap-2.5 pl-px">
          <XpSelect label="Czcionka" options={["Arial"]} className="w-[120px]" />
          <XpSelect label="Rozmiar" options={["1 (8 pt)"]} className="w-[71px]" />
          <XpSelect label="Styl" options={["Nagłówek 1"]} className="w-[102px]" />
          <div className="-ml-[7px] flex">
            <Tool label="Cofnij"><Undo /></Tool>
            <Tool label="Ponów"><Redo /></Tool>
          </div>
        </div>
        <div className="mt-[3px] flex items-center">
          <Tool label="Pogrubienie"><span className={glyph}>B</span></Tool>
          <Tool label="Kursywa"><span className={`${glyph} italic`}>I</span></Tool>
          <Tool label="Podkreślenie"><span className={`${glyph} underline`}>U</span></Tool>
          <Sep />
          <Tool label="Przekreślenie"><span className={`${glyph} line-through`}>S</span></Tool>
          <Tool label="Indeks dolny">
            <span className="flex items-center text-[11px] leading-none font-bold">x<span className="pt-2 text-[8px] text-[#000080]">2</span></span>
          </Tool>
          <Tool label="Indeks górny">
            <span className="flex items-center text-[11px] leading-none font-bold">x<span className="pb-2 text-[8px] text-[#900]">2</span></span>
          </Tool>
          <Sep />
          <Tool label="Do lewej"><AlignLeft /></Tool>
          <Tool label="Do środka"><AlignCenter /></Tool>
          <Tool label="Do prawej"><AlignRight /></Tool>
          <Tool label="Wyjustuj"><AlignFull /></Tool>
          <Sep />
          <Tool label="Kopiuj"><Copy /></Tool>
          <Tool label="Wytnij"><Cut /></Tool>
          <Tool label="Wklej"><Paste /></Tool>
        </div>
        <div className="flex items-center">
          <Tool label="Lista numerowana"><ListNumbers /></Tool>
          <Tool label="Lista punktowana"><ListDots /></Tool>
          <Tool label="Zmniejsz wcięcie"><Indent out /></Tool>
          <Tool label="Zwiększ wcięcie"><Indent /></Tool>
          <Sep />
          <Tool label="Kolor tekstu"><TextColor /></Tool>
          <Tool label="Kolor tła"><FillColor /></Tool>
          <button type="button" aria-label="Styl znaków" className="mx-px mb-1 flex h-4 w-5 items-center justify-center border border-[#aca899] text-[10px] leading-none">
            A
          </button>
          <Sep />
          <Tool label="Linia pozioma"><Rule /></Tool>
          <Tool label="Odnośnik"><Chain /></Tool>
          <Tool label="Obraz"><Picture /></Tool>
          <Tool label="Tabela"><TableIcon /></Tool>
          <Tool label="Kod HTML"><Code /></Tool>
          <Sep />
          <Tool label="Pisownia"><Spell /></Tool>
          <Tool label="Sprawdź"><Tick /></Tool>
          <Tool label="Powiększ"><Expand /></Tool>
        </div>
      </div>
      <textarea
        id="bip"
        className="block h-[98px] w-2/3 resize-none border border-t-black border-r-[#aca899] border-b-[#aca899] border-l-black bg-white p-1 outline-none"
      />
      <div className="h-[19px] border border-t-[#aca899] border-r-white border-b-white border-l-[#aca899] pl-[3px] leading-[19px]">
        Strona::
      </div>
    </div>
  );
}

/* ---------- main panel ---------- */

const field = "h-5 border border-[#7f9db9] bg-white px-1 outline-none";

function Lookup({ name }) {
  return (
    <>
      <RaisedButton aria-label={`${name} - ustaw`} className="w-9 pt-0.5"><Gear /></RaisedButton>
      <RaisedButton aria-label={`${name} - wybierz`} className="w-[29px] pt-1">...</RaisedButton>
    </>
  );
}

function Panel() {
  return (
    <main className="min-w-0 flex-1 bg-white">
      <section className="border-b border-[#aca899] bg-[#ece9d8] text-[11px]">
        <div className="flex h-[22px] items-center gap-1 pr-[7px] pl-[3px]">
          <Notepad />
          <h2 className="flex-1 text-xs">Edycja personelu prowadzącego rejestr - [ Nowa pozycja ]</h2>
          <button type="button" aria-label="Zamknij formularz"><Cross /></button>
        </div>
        <div className="flex h-[23px] items-center gap-2.5 border-t border-r border-b border-t-white border-r-[#aca899] border-b-[#aca899] pl-2 text-xs">
          <button type="button" className="flex items-center gap-2"><Person />System</button>
          <button type="button" className="flex items-center gap-0.5"><Printer />Drukuj</button>
          <button type="button" className="flex items-center gap-2 pl-[3px]"><Cross />Zamknij</button>
        </div>
        <div className="flex h-[26px] items-stretch pt-px">
          <button type="button" className="flex items-center gap-[3px] border-t border-r border-t-white border-r-[#aca899] pr-[11px] pl-2.5">
            <Face />
            Personel
          </button>
          <div className="flex flex-1 justify-end border-b border-white pt-0.5 pr-0.5">
            <span className="flex h-[17px] w-[70px] items-center justify-center border border-t-[#c8c5b8] border-r-[#555] border-b-[#555] border-l-[#c8c5b8] bg-[#f00] text-white">
              Nowa
            </span>
          </div>
        </div>
        <form className="grid grid-cols-[163px_1fr] gap-y-1.5 pt-[22px] pl-1.5 leading-3">
          <label htmlFor="pesel">PESEL:</label>
          <div className="flex gap-2">
            <div className="flex w-[127px] items-center gap-1">
              <input id="pesel" className="h-5 w-[111px] border-2 border-t-[#85826f] border-r-[#f6f5f0] border-b-[#f6f5f0] border-l-[#85826f] bg-[#efa3a3] px-1 outline-none" />
              <ErrorMark />
            </div>
            <Lookup name="PESEL" />
          </div>
          <label htmlFor="komp">Kompetencje:</label>
          <XpSelect id="komp" options={["Prowadzący rejestr"]} className="w-[145px]" />
          <label htmlFor="stan">Stanowisko, funkcja:</label>
          <input id="stan" className={`${field} w-[356px]`} />
          <label htmlFor="osoba">Osoba zastępująca:</label>
          <div className="flex gap-2">
            <div className="w-[127px]">
              <input id="osoba" className={`${field} w-[111px]`} />
            </div>
            <Lookup name="Osoba" />
          </div>
          <label htmlFor="bip">Opis w BIP:</label>
          <Editor />
        </form>
        <hr className="mx-[3px] mt-3.5 h-0.5 border-t border-b border-t-[#999] border-b-white" />
        <div className="flex justify-center gap-2 pt-[13px] pr-0.5 pb-[5px]">
          <RaisedButton className="w-[111px]">Powrót bez zapisu</RaisedButton>
          <RaisedButton className="w-[91px]">Zapisz i wyjdź</RaisedButton>
          <RaisedButton className="w-[62px]">Zastosuj</RaisedButton>
        </div>
      </section>
    </main>
  );
}

export default function App() {
  return (
    <div className={`flex h-screen flex-col overflow-hidden bg-[#ece9d8] text-[11px] text-black ${UI}`}>
      <TitleBar />
      <MenuBar />
      <NavBar />
      <Bookmarks />
      <div className="flex min-h-0 flex-1 border-t border-[#aca899] font-['Liberation_Sans',Arial,sans-serif]">
        <Sidebar />
        <div className="w-[5px] shrink-0 border-r border-l border-r-black border-l-white bg-[#ece9d8]" />
        <Panel />
      </div>
      <footer className="flex h-[22px] shrink-0 items-center border-t border-b-2 border-t-[#aca899] border-b-[#3a78dc] bg-linear-to-r from-[#f3f1e8] to-[#ece9d8] pt-0.5 pr-[5px] pl-1.5">
        <span className="flex-1">Zakończono</span>
        <span className="mr-1 h-4 w-px bg-[#aca899]" />
        <Padlock />
      </footer>
    </div>
  );
}
